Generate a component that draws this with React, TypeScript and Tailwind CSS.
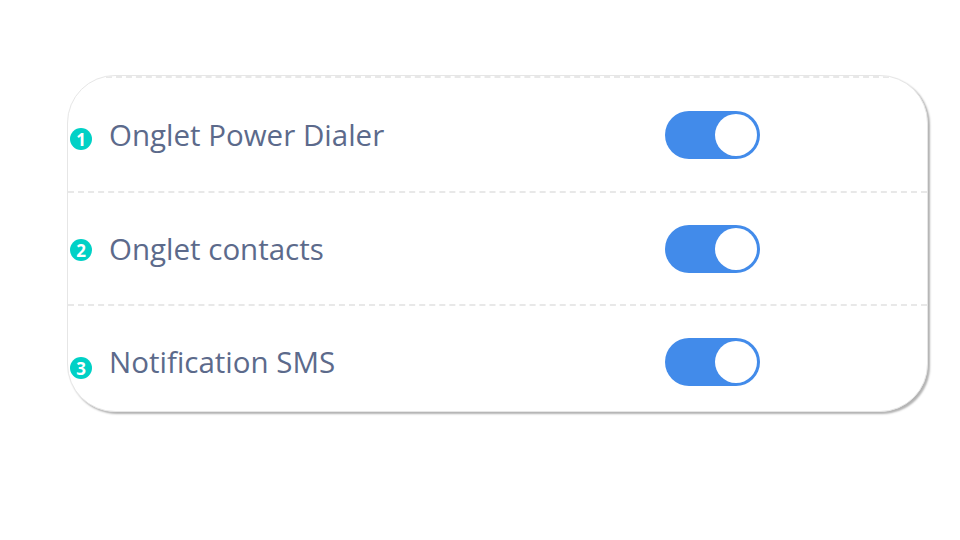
import React from "react";

const rows = [
  { n: "1", label: "Onglet Power Dialer" },
  { n: "2", label: "Onglet contacts" },
  { n: "3", label: "Notification SMS" },
];

function Toggle() {
  return (
    <div className="w-[95px] h-[48px] rounded-full bg-[#428bea] flex items-center justify-end pr-[3px]">
      <div className="w-[42px] h-[42px] rounded-full bg-white" />
    </div>
  );
}

export default function App() {
  return (
    <div className="w-[960px] h-[540px] bg-white pt-[75px] pl-[67px]" style={{ fontFamily: '"Open Sans", "Noto Sans", sans-serif' }}>
      <div className="relative w-[861px] h-[337px] rounded-[48px] bg-white border border-[#e6e6e6] shadow-[2px_2px_2px_rgba(0,0,0,0.3)]">
        <div className="h-[335px] rounded-[48px] overflow-hidden">
          <div className="mx-[38px] border-t-2 border-dashed border-[#e8e8e8]" />
          {rows.map((r, i) => (
            <div
              key={r.n}
              className={`h-[113px] flex items-center pl-[41px] ${i > 0 ? "border-t-2 border-dashed border-[#e8e8e8]" : ""}`}
            >
              <div className="w-[556px] text-[29.5px] font-normal leading-none text-[#5c6a8b]">{r.label}</div>
              <Toggle />
            </div>
          ))}
        </div>
        {rows.map((r, i) => (
          <div
            key={"b" + r.n}
            className="absolute left-[2px] w-[22px] h-[22px] rounded-full bg-[#00d1c6] text-white text-[17px] font-bold leading-none flex items-center justify-center"
            style={{ top: [52, 163, 281][i] }}
          >
            {r.n}
          </div>
        ))}
      </div>
    </div>
  );
}
